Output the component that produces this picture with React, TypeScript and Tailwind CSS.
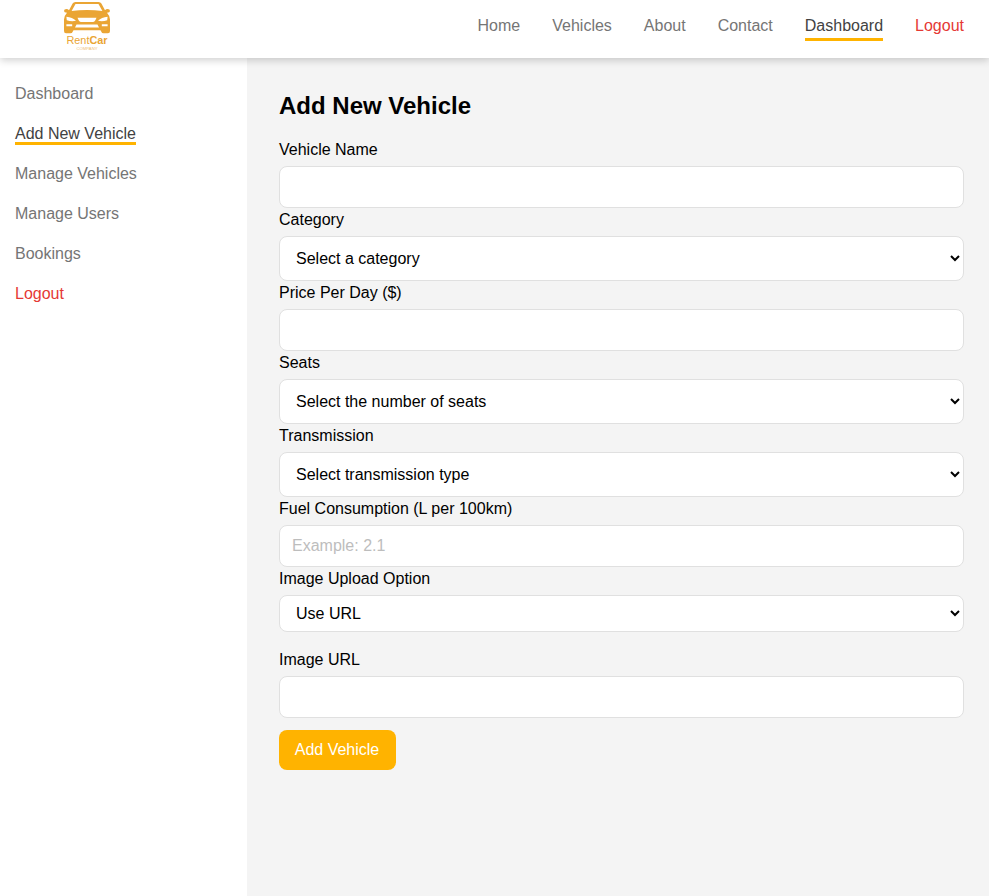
import React from "react";

const navItems = ["Home", "Vehicles", "About", "Contact", "Dashboard"];
const sideItems = ["Dashboard", "Add New Vehicle", "Manage Vehicles", "Manage Users", "Bookings"];

function Logo() {
  return (
    <svg viewBox="0 0 50 54" className="ml-[62px] h-[54px] w-[50px]" fill="#eaa534">
      <path
        fillRule="evenodd"
        d="M10.6 3.6Q11.4 2 13.5 2H36.5Q38.6 2 39.4 3.6L43 10.2Q44 9 45.6 9Q48 9.2 48 11Q48 12.6 45 12.8Q47.6 15.5 48 19.5V31Q48 33.2 46 33.2H41.5Q39.6 33.2 38.5 30.2H11.5Q10.4 33.2 8.5 33.2H4Q2 33.2 2 31V19.5Q2.4 15.5 5 12.8Q2 12.6 2 11Q2 9.2 4.4 9Q6 9 7 10.2ZM13.5 4.1L9.6 11Q17 9.9 25 9.9Q33 9.9 40.4 11L36.5 4.1ZM4.4 16.8Q10.5 17.3 14 20.8Q9 21.7 4.8 20.2ZM45.6 16.8Q39.5 17.3 36 20.8Q41 21.7 45.2 20.2ZM15.5 17.8H34.5Q33 22 31 22H19Q17 22 15.5 17.8ZM4.4 24.3H10.2V26.2H4.4ZM39.8 24.3H45.6V26.2H39.8ZM14.5 24.6H35.5L37 27.6H13Z"
      />
      <text x="25" y="43.5" textAnchor="middle" textLength="41" lengthAdjust="spacingAndGlyphs" className="font-['Liberation_Sans',sans-serif] text-[11px]">
        Rent<tspan className="font-bold">Car</tspan>
      </text>
      <text x="25" y="49.7" textAnchor="middle" textLength="21" lengthAdjust="spacingAndGlyphs" className="font-['Liberation_Sans',sans-serif] text-[3.8px]" opacity=".7">
        COMPANY
      </text>
    </svg>
  );
}

const control = "block w-full rounded-lg border border-[#e0e0e0] bg-white text-base text-black outline-none";

function Field({ label, children }: { label: string; children: React.ReactNode }) {
  return (
    <label className="block">
      <span className="mb-1 block leading-6">{label}</span>
      {children}
    </label>
  );
}

function Input({ placeholder }: { placeholder?: string }) {
  return <input placeholder={placeholder} className={`${control} h-[42px] px-3 placeholder:text-[#bdbdbd]`} />;
}

function Select({ option, short }: { option: string; short?: boolean }) {
  return (
    <select className={`${control} ${short ? "h-[37px] pl-3" : "h-[45px] pl-3"}`}>
      <option>{option}</option>
    </select>
  );
}

export default function App() {
  return (
    <div className="flex h-[896px] flex-col overflow-hidden bg-white font-['Liberation_Sans',Arial,sans-serif] text-base text-black">
      <header className="relative z-10 flex h-[58px] shrink-0 items-start justify-between bg-white pr-[25px] shadow-[0_2px_8px_rgba(0,0,0,0.2)]">
        <Logo />
        <nav className="flex gap-8 pt-[14px] leading-6 text-[#757575]">
          {navItems.map((item) => (
            <a
              key={item}
              className={item === "Dashboard" ? "border-b-3 border-[#ffb300] text-[#424242]" : ""}
            >
              {item}
            </a>
          ))}
          <a className="text-[#e53935]">Logout</a>
        </nav>
      </header>
      <div className="flex flex-1">
        <aside className="flex w-[247px] shrink-0 flex-col items-start gap-[18px] pl-[15px] pt-[25px] text-[#757575]">
          {sideItems.map((item) => (
            <a
              key={item}
              className={
                item === "Add New Vehicle"
                  ? "h-[22px] border-b-3 border-[#ffb300] leading-[22px] text-[#424242]"
                  : "h-[22px] leading-[22px]"
              }
            >
              {item}
            </a>
          ))}
          <a className="h-[22px] leading-[22px] text-[#e53935]">Logout</a>
        </aside>
        <main className="flex-1 bg-[#f4f4f4] pl-8 pr-[25px] pt-8">
          <h1 className="mb-4 text-2xl font-bold">Add New Vehicle</h1>
          <form>
            <Field label="Vehicle Name"><Input /></Field>
            <Field label="Category"><Select option="Select a category" /></Field>
            <Field label="Price Per Day ($)"><Input /></Field>
            <Field label="Seats"><Select option="Select the number of seats" /></Field>
            <Field label="Transmission"><Select option="Select transmission type" /></Field>
            <Field label="Fuel Consumption (L per 100km)"><Input placeholder="Example: 2.1" /></Field>
            <Field label="Image Upload Option"><Select option="Use URL" short /></Field>
            <div className="mt-4">
              <Field label="Image URL"><Input /></Field>
            </div>
            <button type="button" className="mt-3 h-10 w-[117px] rounded-lg bg-[#ffb300] pr-px text-white">
              Add Vehicle
            </button>
          </form>
        </main>
      </div>
    </div>
  );
}
